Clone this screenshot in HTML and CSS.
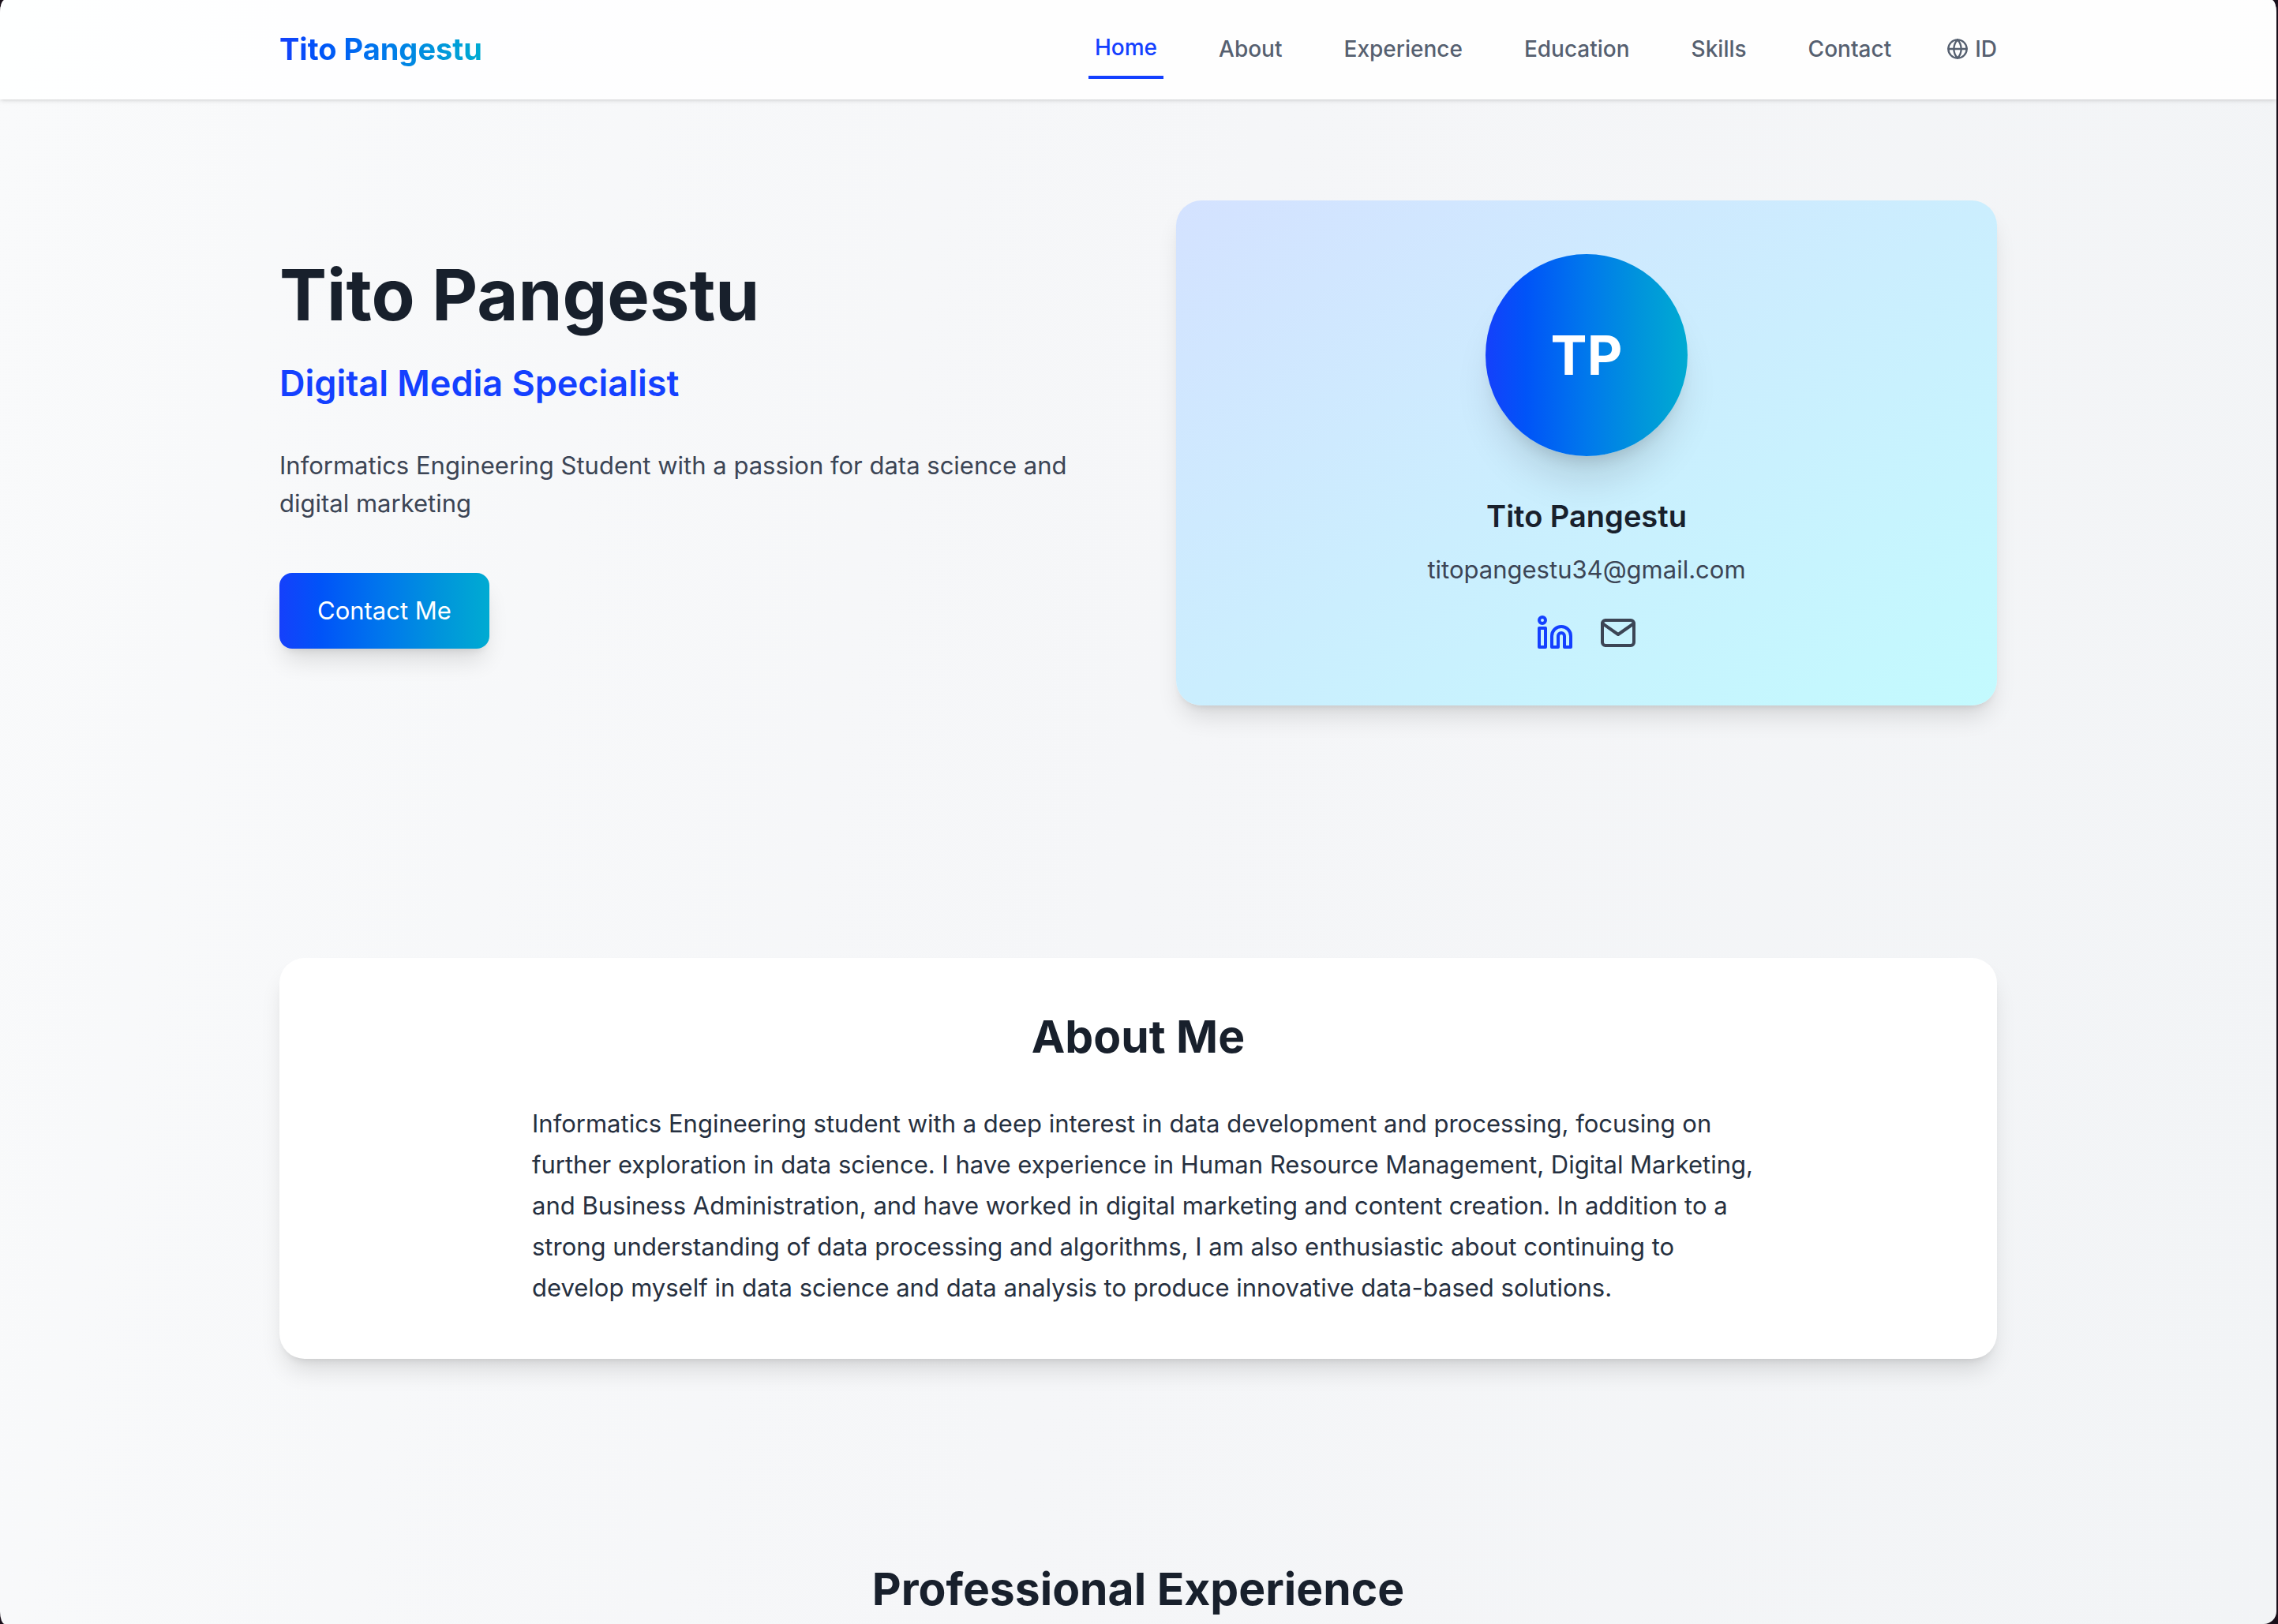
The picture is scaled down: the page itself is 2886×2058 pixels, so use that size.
FILE: index.html
```html
<!DOCTYPE html>
<html lang="en">
<head>
<meta charset="utf-8">
<meta name="viewport" content="width=device-width, initial-scale=1">
<title>Tito Pangestu</title>
<link rel="stylesheet" href="styles.css">
</head>
<body>
<div class="frame">
  <header class="site-header">
    <div class="container header-row">
      <a class="logo gradient-text" href="#home">Tito Pangestu</a>
      <nav class="nav" aria-label="Main">
        <a class="nav-link nav-link-active" href="#home">Home</a>
        <a class="nav-link" href="#about">About</a>
        <a class="nav-link" href="#experience">Experience</a>
        <a class="nav-link" href="#education">Education</a>
        <a class="nav-link" href="#skills">Skills</a>
        <a class="nav-link" href="#contact">Contact</a>
        <button class="lang" type="button">
          <svg class="icon lang-icon" viewBox="0 0 24 24" aria-hidden="true"><circle cx="12" cy="12" r="10"/><path d="M12 2a14.5 14.5 0 0 0 0 20 14.5 14.5 0 0 0 0-20"/><path d="M2 12h20"/></svg>
          <span>ID</span>
        </button>
      </nav>
    </div>
  </header>
  <main>
    <section class="container hero" id="home">
      <div class="intro">
        <h1 class="intro-name">Tito Pangestu</h1>
        <p class="intro-role">Digital Media Specialist</p>
        <p class="intro-text">Informatics Engineering Student with a passion for data science and digital marketing</p>
        <a class="cta" href="#contact">Contact Me</a>
      </div>
      <div class="profile">
        <div class="avatar">TP</div>
        <h3 class="profile-name">Tito Pangestu</h3>
        <p class="profile-email">titopangestu34@gmail.com</p>
        <div class="social">
          <a class="social-link social-linkedin" href="#linkedin" aria-label="LinkedIn">
            <svg class="icon social-icon" viewBox="0 0 24 24" aria-hidden="true"><path d="M16 8a6 6 0 0 1 6 6v7h-4v-7a2 2 0 0 0-2-2 2 2 0 0 0-2 2v7h-4v-7a6 6 0 0 1 6-6z"/><rect x="2" y="9" width="4" height="12"/><circle cx="4" cy="4" r="2"/></svg>
          </a>
          <a class="social-link" href="mailto:titopangestu34@gmail.com" aria-label="Email">
            <svg class="icon social-icon" viewBox="0 0 24 24" aria-hidden="true"><path d="M4 4h16c1.1 0 2 .9 2 2v12c0 1.1-.9 2-2 2H4c-1.1 0-2-.9-2-2V6c0-1.100.9-2 2-2z"/><path d="M22 6l-10 7L2 6"/></svg>
          </a>
        </div>
      </div>
    </section>
    <section class="container about" id="about">
      <div class="about-card">
        <h2 class="section-title">About Me</h2>
        <div class="about-body">
          <p class="about-text">Informatics Engineering student with a deep interest in data development and processing, focusing on further exploration in data science. I have experience in Human Resource Management, Digital Marketing, and Business Administration, and have worked in digital marketing and content creation. In addition to a strong understanding of data processing and algorithms, I am also enthusiastic about continuing to develop myself in data science and data analysis to produce innovative data-based solutions.</p>
        </div>
      </div>
    </section>
    <section class="container experience" id="experience">
      <h2 class="section-title">Professional Experience</h2>
    </section>
  </main>
</div>
</body>
</html>
```
FILE: styles.css
```css
:root {
  --blue: #1440ff;
  --ink: #18202c;
  --slate: #3c4555;
  --muted: #566070;
  --brand: linear-gradient(to right, #1540fb 0%, #0054f8 20%, #0078ec 50%, #0094dc 76%, #00abd2 100%);
  --shadow: 0 20px 30px -6px rgba(0, 0, 0, .12), 0 8px 12px -8px rgba(0, 0, 0, .14);
}

* { box-sizing: border-box; margin: 0; padding: 0; }

body {
  background: #190f1a;
  color: var(--ink);
  font-family: Inter, "Liberation Sans", sans-serif;
  font-size: 31px;
  line-height: 48px;
}

a { color: inherit; text-decoration: none; }

.frame {
  height: 100vh;
  margin-right: 2px;
  overflow-y: auto;
  scrollbar-width: none;
  border-radius: 6px 6px 16px 6px / 16px;
  background: linear-gradient(101deg, #f9fafb, #f5f6f8 50%, #f2f4f6);
}

.container {
  width: 100%;
  max-width: 2304px;
  margin: 0 auto;
  padding-left: 64px;
  padding-right: 64px;
}

.icon {
  display: block;
  fill: none;
  stroke: currentColor;
  stroke-width: 2;
  stroke-linecap: round;
  stroke-linejoin: round;
}

/* Header */
.site-header {
  position: sticky;
  top: 0;
  z-index: 1;
  padding: 24px 0;
  border-bottom: 2px solid transparent;
  background: rgba(255, 255, 255, .85);
  box-shadow: 0 2px 6px rgba(0, 0, 0, .1), 0 2px 4px -2px rgba(0, 0, 0, .1);
}

.header-row { display: flex; align-items: center; justify-content: space-between; }

.logo { font-size: 38px; line-height: 56px; font-weight: 700; }

.gradient-text {
  background: var(--brand);
  background-clip: text;
  -webkit-background-clip: text;
  color: transparent;
}

.nav { display: flex; align-items: center; gap: 62px; color: var(--muted); }

.nav-link {
  padding: 16px 8px;
  font-size: 28px;
  line-height: 40px;
  font-weight: 500;
}

.nav-link-active { color: var(--blue); border-bottom: 4px solid var(--blue); }

.lang {
  display: flex;
  align-items: center;
  gap: 8px;
  border: 0;
  background: none;
  color: inherit;
  font: 500 28px/40px Inter, "Liberation Sans", sans-serif;
}

.lang-icon { width: 28px; height: 28px; }

/* Hero */
.hero {
  display: grid;
  grid-template-columns: 1fr 1fr;
  align-items: center;
  gap: 96px;
  padding-top: 128px;
  padding-bottom: 128px;
}

.intro-name { margin-bottom: 32px; font-size: 90px; line-height: 96px; font-weight: 700; }

.intro-role {
  margin-bottom: 48px;
  color: var(--blue);
  font-size: 45px;
  line-height: 64px;
  font-weight: 600;
}

.intro-text { margin-bottom: 64px; color: var(--slate); }

.cta {
  display: inline-block;
  vertical-align: top;
  padding: 24px 48px;
  border-radius: 16px;
  background: var(--brand);
  box-shadow: var(--shadow);
  color: #fff;
}

.profile {
  display: flex;
  flex-direction: column;
  align-items: center;
  justify-content: center;
  min-height: 640px;
  border-radius: 32px;
  background: linear-gradient(to bottom right, #d4e2ff, #cbeefe 50%, #c3fafe);
  box-shadow: var(--shadow);
}

.avatar {
  display: flex;
  align-items: center;
  justify-content: center;
  width: 256px;
  height: 256px;
  margin-bottom: 48px;
  border-radius: 50%;
  background: var(--brand);
  box-shadow: 0 40px 50px -10px rgba(0, 0, 0, .12), 0 16px 20px -12px rgba(0, 0, 0, .14);
  color: #fff;
  font-size: 69px;
  line-height: 80px;
  font-weight: 700;
}

.profile-name { margin-bottom: 16px; font-size: 38px; line-height: 56px; font-weight: 600; }
.profile-email { margin-bottom: 32px; color: var(--slate); }

.social { display: flex; gap: 32px; color: var(--slate); }
.social-linkedin { color: var(--blue); }
.social-icon { width: 48px; height: 48px; }

/* Sections */
.section-title {
  font-size: 57px;
  line-height: 72px;
  font-weight: 700;
  text-align: center;
}

.about { padding-top: 192px; padding-bottom: 128px; }

.about-card {
  padding: 64px;
  border-radius: 32px;
  background: #fff;
  box-shadow: var(--shadow);
}

.about-body {
  max-width: 1536px;
  margin: 48px auto 0;
}

/* Lets the ragged right edge run a little past the column */
.about-text {
  margin-right: -16px;
  color: #263040;
  line-height: 52px;
}

.experience { padding-top: 128px; }
```
